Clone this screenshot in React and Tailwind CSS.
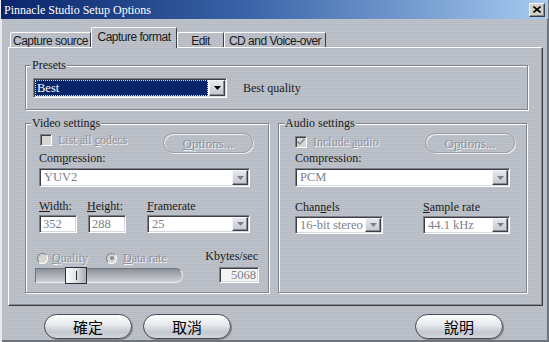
const STRIPES =
  "bg-[repeating-linear-gradient(180deg,#b6bac2_0px,#b6bac2_1px,#bec2ca_1px,#bec2ca_2px)] bg-fixed";
const SUNKEN =
  "border border-t-[#7c8088] border-l-[#7c8088] border-r-white border-b-white shadow-[inset_1px_1px_0_#3c4046,inset_-1px_-1px_0_#d6d9de]";
const RAISED =
  "border border-t-[#f4f5f8] border-l-[#f4f5f8] border-r-[#3c4046] border-b-[#3c4046] shadow-[inset_-1px_-1px_0_#868a92]";
const DIMMED = "text-[#8e929a] [text-shadow:1px_1px_0_#f4f5f8]";

function Arrow({ dim }) {
  return (
    <svg width="7" height="4" viewBox="0 0 7 4">
      <polygon points="0,0 7,0 3.5,4" fill={dim ? "#7c8088" : "#000"} />
    </svg>
  );
}

function DropButton({ dim }) {
  return (
    <div className={`w-[16px] h-full shrink-0 flex items-center justify-center bg-[linear-gradient(180deg,#e6e8ec,#c4c8d0)] ${RAISED}`}>
      <Arrow dim={dim} />
    </div>
  );
}

function Combo({ className, text }) {
  return (
    <div className={`${className} ${SUNKEN} bg-white flex items-stretch p-[1px]`}>
      <div className="flex-1 min-w-0 overflow-hidden whitespace-nowrap flex items-center pl-[3px] text-[#7c8088] leading-none text-[12.5px]">{text}</div>
      <DropButton dim />
    </div>
  );
}

function Field({ className, text }) {
  return (
    <div className={`${className} ${SUNKEN} bg-white flex items-center pl-[3px] text-[#7c8088] leading-none text-[12.5px]`}>
      {text}
    </div>
  );
}

function Checkbox({ checked, className }) {
  return (
    <div className={`w-[12px] h-[12px] ${SUNKEN} bg-[#d8d8d2] flex items-center justify-center ${className}`}>
      {checked && (
        <svg width="8" height="7" viewBox="0 0 8 7">
          <path d="M0.5 3.5 L3 6 L7.5 0.8" stroke="#8a8e96" strokeWidth="1.6" fill="none" />
        </svg>
      )}
    </div>
  );
}

function Radio({ dot }) {
  return (
    <div className="w-[11px] h-[11px] rounded-full border border-t-[#7c8088] border-l-[#7c8088] border-r-white border-b-white bg-[#d6d6d0] flex items-center justify-center">
      {dot && <div className="w-[4px] h-[4px] rounded-full bg-[#8a8e96]" />}
    </div>
  );
}

function OptionsButton({ className, children }) {
  return (
    <div className={`${className} rounded-full border border-[#9a9ea6] shadow-[inset_1px_1px_0_#eef0f4,1px_1px_0_#eef0f4] flex items-center justify-center text-[13px] leading-none ${DIMMED}`}>
      {children}
    </div>
  );
}

function PillButton({ children, className }) {
  return (
    <div className={`${className} w-[88px] h-[25px] rounded-full border border-[#464a52] shadow-[1px_1px_0_#80848c,inset_0_1px_0_#fff] bg-[linear-gradient(180deg,#ffffff_0%,#e8eaee_40%,#c4c8d0_75%,#d2d5db_100%)] flex items-center justify-center font-['Noto_Sans_CJK_TC',sans-serif] text-[15px] leading-none text-black`}>
      {children}
    </div>
  );
}

function Group({ title, className, children }) {
  return (
    <fieldset className={`${className} border border-[#80848c] shadow-[1px_1px_0_#fff,inset_1px_1px_0_#fff]`}>
      <legend className={`${STRIPES} ml-[5px] px-[1px] leading-[14px]`}>{title}</legend>
      {children}
    </fieldset>
  );
}

function Tab({ label, active, className }) {
  return (
    <div
      className={`${className} flex items-center justify-center font-['Liberation_Sans',sans-serif] font-normal text-[12px] tracking-[-0.5px] leading-none border-t border-l border-r border-t-white border-l-white border-r-[#3a3e44] rounded-t-[2px] ${
        active ? `h-[21px] -mb-px relative z-10 pb-[3px] ${STRIPES}` : "h-[15px] pt-[1px]"
      }`}
    >
      {label}
    </div>
  );
}

export default function App() {
  return (
    <div className={`w-[549px] h-[342px] overflow-hidden flex flex-col ${STRIPES} font-['Liberation_Serif','Times_New_Roman',serif] font-normal text-[12px] text-[#1a1a1a] shadow-[inset_2px_0_0_#e8eaee,inset_-2px_-2px_0_#70747c]`}>
      {/* title bar */}
      <div className="h-[19px] mx-[1px] flex items-center justify-between pl-[3px] pr-[3px] bg-[linear-gradient(90deg,#0a246a_0%,#3a64a8_45%,#a6caf0_100%)]">
        <span className="text-white text-[12px] leading-none">Pinnacle Studio Setup Options</span>
        <div className={`w-[16px] h-[14px] bg-[#d4d0c8] ${RAISED} flex items-center justify-center`}>
          <svg width="8" height="7" viewBox="0 0 8 7">
            <path d="M0.5 0.5 L7.5 6.5 M7.5 0.5 L0.5 6.5" stroke="#000" strokeWidth="1.6" />
          </svg>
        </div>
      </div>

      {/* tabs */}
      <div className="h-[28px] flex items-end pl-[10px]">
        <Tab label="Capture source" className="w-[81px]" />
        <Tab label="Capture format" active className="w-[86px]" />
        <Tab label="Edit" className="w-[47px]" />
        <Tab label="CD and Voice-over" className="w-[102px]" />
      </div>

      {/* tab panel */}
      <div className="ml-[8px] w-[535px] h-[259px] border border-t-white border-l-white border-r-[#3a3e44] border-b-[#3a3e44] shadow-[inset_-1px_-1px_0_#868a92] pt-[10px] pl-[16px]">
        <Group title="Presets" className="w-[503px] h-[52px]">
          <div className="mt-[6px] pl-[7px] flex items-center">
            <div className={`w-[194px] h-[20px] ${SUNKEN} bg-white flex items-stretch p-[1px]`}>
              <div className="flex-1 mr-[1px] bg-[#0a246a] outline outline-1 outline-dotted outline-[#e8e0a0] -outline-offset-1 flex items-center pl-[2px] text-white text-[12.5px] leading-none">
                Best
              </div>
              <DropButton />
            </div>
            <span className="ml-[16px] leading-none">Best quality</span>
          </div>
        </Group>

        <div className="mt-[6px] flex gap-[9px]">
          {/* video settings */}
          <Group title="Video settings" className="w-[244px] h-[177px]">
            <div className="mt-[3px] h-[18px] flex items-start pl-[14px] pr-[15px]">
              <div className="flex items-center h-[13px]">
                <Checkbox />
                <span className={`ml-[6px] leading-none ${DIMMED}`}>
                  List all <u>c</u>odecs
                </span>
              </div>
              <OptionsButton className="ml-auto w-[90px] h-[20px] shrink-0">
                <span><u>O</u>ptions...</span>
              </OptionsButton>
            </div>
            <div className="pl-[13px] leading-[14px]">
              Com<u>p</u>ression:
            </div>
            <Combo className="mt-[3px] ml-[13px] w-[211px] h-[19px]" text="YUV2" />
            <div className="mt-[12px] ml-[13px] flex">
              <div className="w-[48px]">
                <div className="leading-[14px]"><u>W</u>idth:</div>
                <Field className="mt-[2px] w-[38px] h-[18px]" text="352" />
              </div>
              <div className="w-[60px]">
                <div className="leading-[14px]"><u>H</u>eight:</div>
                <Field className="mt-[2px] ml-[1px] w-[38px] h-[18px]" text="288" />
              </div>
              <div>
                <div className="leading-[14px]"><u>F</u>ramerate</div>
                <Combo className="mt-[2px] w-[103px] h-[18px]" text="25" />
              </div>
            </div>
            <div className="mt-[16px] flex pl-[9px] pr-[9px]">
              <div>
                <div className={`mt-[2px] h-[14px] flex items-center pl-[2px] ${DIMMED}`}>
                  <Radio />
                  <span className="ml-[4px] leading-none"><u>Q</u>uality</span>
                  <div className="ml-[18px]">
                    <Radio dot />
                  </div>
                  <span className="ml-[6px] leading-none"><u>D</u>ata rate</span>
                </div>
                <div className="mt-[3px] w-[148px] h-[15px] rounded-r-full rounded-l-[2px] border border-t-[#70747c] border-l-[#70747c] border-b-[#e8eaee] border-r-[#e8eaee] bg-[linear-gradient(180deg,#8c9098,#b4b8c0_60%,#ccd0d6)] flex items-center">
                  <div className="ml-[29px] -mt-[1px] w-[22px] h-[17px] border border-[#2c3038] bg-[linear-gradient(90deg,#ffffff,#dfe2e6_50%,#a8acb4)] flex items-center justify-center">
                    <div className="w-px h-[9px] bg-[#2c3038]" />
                  </div>
                </div>
              </div>
              <div className="ml-auto flex flex-col items-end">
                <div className="leading-[14px] mr-[1px]">Kbytes/sec</div>
                <div className={`mt-[4px] w-[40px] h-[16px] ${SUNKEN} bg-[#f4f4f2] flex items-center justify-end pr-[2px] text-[#7c8088] text-[12.5px] leading-none`}>
                  5068
                </div>
              </div>
            </div>
          </Group>

          {/* audio settings */}
          <Group title="Audio settings" className="w-[249px] h-[177px]">
            <div className="mt-[3px] h-[18px] flex items-start pl-[16px] pr-[11px]">
              <div className="flex items-center h-[13px] mt-[2px]">
                <Checkbox checked />
                <span className={`ml-[6px] leading-none ${DIMMED}`}>
                  Include <u>a</u>udio
                </span>
              </div>
              <OptionsButton className="ml-auto w-[90px] h-[20px] shrink-0">
                <span>O<u>p</u>tions...</span>
              </OptionsButton>
            </div>
            <div className="pl-[16px] leading-[14px]">Compression:</div>
            <Combo className="mt-[3px] ml-[16px] w-[215px] h-[19px]" text="PCM" />
            <div className="mt-[13px] ml-[16px] flex">
              <div className="w-[128px]">
                <div className="leading-[14px]">Chan<u>n</u>els</div>
                <Combo className="mt-[2px] w-[88px] h-[18px]" text="16-bit stereo" />
              </div>
              <div>
                <div className="leading-[14px]"><u>S</u>ample rate</div>
                <Combo className="mt-[2px] w-[87px] h-[18px]" text="44.1 kHz" />
              </div>
            </div>
          </Group>
        </div>
      </div>

      {/* dialog buttons */}
      <div className="mt-[8px] flex pl-[44px] pr-[46px]">
        <PillButton>確定</PillButton>
        <PillButton className="ml-[11px]">取消</PillButton>
        <PillButton className="ml-auto">說明</PillButton>
      </div>
    </div>
  );
}
